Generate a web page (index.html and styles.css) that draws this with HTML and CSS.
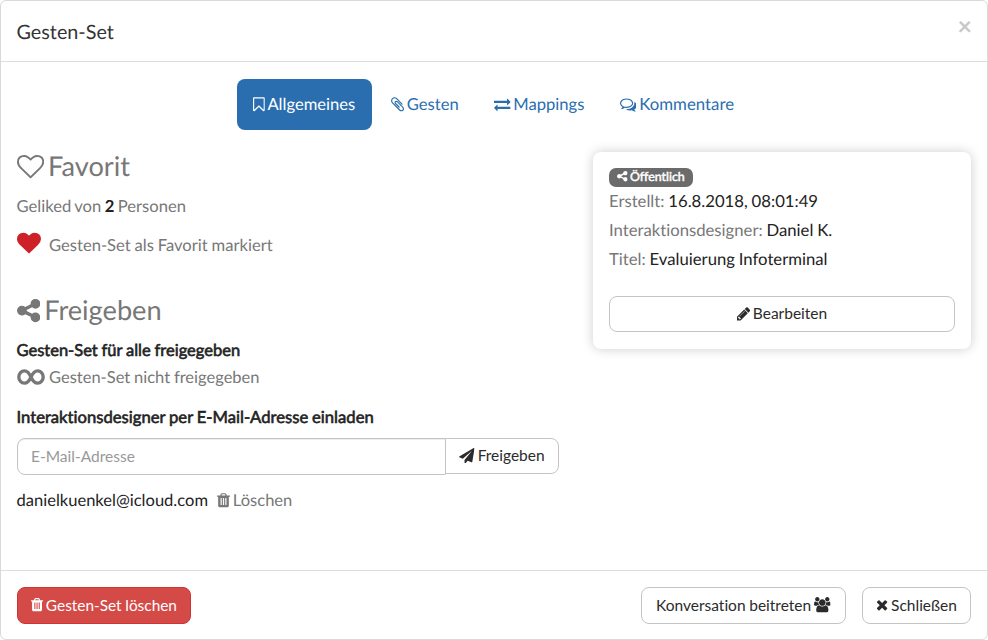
FILE: index.html
```html
<!DOCTYPE html>
<html lang="de">
<head>
<meta charset="utf-8">
<title>Gesten-Set</title>
<link rel="stylesheet" href="styles.css">
</head>
<body>
<svg class="sprite" aria-hidden="true">
  <symbol id="bookmark" viewBox="256 0 1280 1792"><path d="M1408 256h-1024v1242l423-406 89-85 89 85 423 406v-1242zm12-128q23 0 44 9 33 13 52.5 41t19.5 62v1289q0 34-19.5 62t-52.5 41q-19 8-44 8-48 0-83-32l-441-424-441 424q-36 33-83 33-23 0-44-9-33-13-52.5-41t-19.5-62v-1289q0-34 19.5-62t52.5-41q21-9 44-9h1048z"/></symbol>
  <symbol id="clip" viewBox="192 0 1408 1792"><path d="M1596 1385q0 117-79 196t-196 79q-135 0-235-100l-777-776q-113-115-113-271 0-159 110-270t269-111q158 0 273 113l605 606q10 10 10 22 0 16-30.5 46.5t-46.5 30.5q-13 0-23-10l-606-607q-79-77-181-77-106 0-179 75t-73 181q0 105 76 181l776 777q63 63 145 63 64 0 106-42t42-106q0-82-63-145l-581-581q-26-24-60-24-29 0-48 19t-19 48q0 32 25 59l410 410q10 10 10 22 0 16-31 47t-47 31q-12 0-22-10l-410-410q-63-61-63-149 0-82 57-139t139-57q88 0 149 63l581 581q100 98 100 235z"/></symbol>
  <symbol id="exchange" viewBox="0 0 1792 1792"><path d="M1792 1184v192q0 13-9.5 22.5t-22.5 9.5h-1376v192q0 13-9.5 22.5t-22.5 9.5q-12 0-24-10l-319-320q-9-9-9-22 0-14 9-23l320-320q9-9 23-9 13 0 22.5 9.5t9.5 22.5v192h1376q13 0 22.5 9.5t9.5 22.5zm0-544q0 14-9 23l-320 320q-9 9-23 9-13 0-22.5-9.5t-9.5-22.5v-192h-1376q-13 0-22.5-9.5t-9.5-22.5v-192q0-13 9.5-22.5t22.5-9.5h1376v-192q0-14 9-23t23-9q12 0 24 10l319 319q9 9 9 23z"/></symbol>
  <symbol id="comments" viewBox="0 0 1792 1792"><path d="M704 384q-153 0-286 52t-211.5 141-78.5 191q0 82 53 158t149 132l97 56-35 84q34-20 62-39l44-31 53 10q78 14 153 14 153 0 286-52t211.5-141 78.5-191-78.5-191-211.5-141-286-52zm0-128q191 0 353.5 68.5t256.5 186.5 94 257-94 257-256.5 186.5-353.5 68.5q-86 0-176-16-124 88-278 128-36 9-86 16h-3q-11 0-20.5-8t-11.5-21q-1-3-1-6.5t.5-6.5 2-6l2.5-5 3.5-5.5 4-5 4.5-5 4-4.5q5-6 23-25t26-29.5 22.5-29 25-38.5 20.5-44q-124-72-195-177t-71-224q0-139 94-257t256.5-186.5 353.5-68.5zm822 1169q10 24 20.5 44t25 38.5 22.5 29 26 29.5 23 25q1 1 4 4.5t4.5 5 4 5 3.5 5.5l2.5 5 2 6 .5 6.5-1 6.5q-3 14-13 22t-22 7q-50-7-86-16-154-40-278-128-90 16-176 16-271 0-472-132 58 4 88 4 161 0 309-45t264-129q125-92 192-212t67-254q0-77-23-152 129 71 204 178t75 230q0 120-71 224.5t-195 176.5z"/></symbol>
  <symbol id="heart-o" viewBox="0 0 1792 1792"><path d="M1664 596q0-81-21.5-143t-55-98.5-81.5-59.5-94-31-98-8-112 25.5-110.5 64-86.5 72-60 61.5q-18 22-49 22t-49-22q-24-28-60-61.5t-86.5-72-110.5-64-112-25.5-98 8-94 31-81.5 59.5-55 98.5-21.5 143q0 168 187 355l581 560 580-559q188-188 188-356zm128 0q0 221-229 450l-623 600q-18 18-44 18t-44-18l-624-602q-10-8-27.5-26t-55.5-65.5-68-97.5-53.5-121-23.5-138q0-220 127-344t351-124q62 0 126.5 21.5t120 58 95.5 68.5 76 68q36-36 76-68t95.5-68.5 120-58 126.5-21.5q224 0 351 124t127 344z"/></symbol>
  <symbol id="heart" viewBox="0 0 1792 1792"><path d="M896 1664q-26 0-44-18l-624-602q-10-8-27.5-26t-55.5-65.5-68-97.5-53.5-121-23.5-138q0-220 127-344t351-124q62 0 126.5 21.5t120 58 95.5 68.5 76 68q36-36 76-68t95.5-68.5 120-58 126.5-21.5q224 0 351 124t127 344q0 221-229 450l-623 600q-18 18-44 18z"/></symbol>
  <symbol id="share" viewBox="128 0 1536 1792"><path d="M1344 1024q133 0 226.500 93.500t93.500 226.500-93.500 226.500-226.500 93.500-226.500-93.500-93.500-226.500q0-12 2-34l-360-180q-92 86-218 86-133 0-226.500-93.500t-93.500-226.500 93.500-226.500 226.500-93.500q126 0 218 86l360-180q-2-22-2-34 0-133 93.500-226.500t226.500-93.500 226.500 93.500 93.500 226.500-93.500 226.500-226.500 93.500q-126 0-218-86l-360 180q2 22 2 34t-2 34l360 180q92-86 218-86z"/></symbol>
  <symbol id="infinity" viewBox="0 0 28 16"><path d="M14 8C12.300 4.200 10.400 1.800 7.400 1.800S1.800 4.500 1.800 8s2.600 6.200 5.600 6.200S12.300 11.800 14 8s3.600-6.200 6.600-6.200 5.600 2.700 5.600 6.200-2.600 6.200-5.600 6.200S15.700 11.800 14 8z" fill="none" stroke="currentColor" stroke-width="3.300"/></symbol>
  <symbol id="pencil" viewBox="128 0 1536 1792"><path d="M491 1536l91-91-235-235-91 91v107h128v128h107zm523-928q0-22-22-22-10 0-17 7l-542 542q-7 7-7 17 0 22 22 22 10 0 17-7l542-542q7-7 7-17zm-54-192l416 416-832 832h-416v-416zm683 96q0 53-37 90l-166 166-416-416 166-165q36-38 90-38 53 0 91 38l235 234q37 39 37 91z"/></symbol>
  <symbol id="trash" viewBox="192 0 1408 1792"><path d="M704 1376v-704q0-14-9-23t-23-9h-64q-14 0-23 9t-9 23v704q0 14 9 23t23 9h64q14 0 23-9t9-23zm256 0v-704q0-14-9-23t-23-9h-64q-14 0-23 9t-9 23v704q0 14 9 23t23 9h64q14 0 23-9t9-23zm256 0v-704q0-14-9-23t-23-9h-64q-14 0-23 9t-9 23v704q0 14 9 23t23 9h64q14 0 23-9t9-23zm-544-992h448l-48-117q-7-9-17-11h-317q-10 2-17 11zm928 32v64q0 14-9 23t-23 9h-96v948q0 83-47 143.500t-113 60.500h-832q-66 0-113-58.500t-47-141.500v-952h-96q-14 0-23-9t-9-23v-64q0-14 9-23t23-9h309l70-167q15-37 54-63t79-26h320q40 0 79 26t54 63l70 167h309q14 0 23 9t9 23z"/></symbol>
  <symbol id="times" viewBox="192 0 1408 1792"><path d="M1490 1322q0 40-28 68l-136 136q-28 28-68 28t-68-28l-294-294-294 294q-28 28-68 28t-68-28l-136-136q-28-28-28-68t28-68l294-294-294-294q-28-28-28-68t28-68l136-136q28-28 68-28t68 28l294 294 294-294q28-28 68-28t68 28l136 136q28 28 28 68t-28 68l-294 294 294 294q28 28 28 68z"/></symbol>
  <symbol id="plane" viewBox="0 0 1792 1792"><path d="M1764 11q33 24 27 64l-256 1536q-5 29-32 45-14 8-31 8-11 0-24-5l-453-185-242 295q-18 23-49 23-13 0-22-4-19-7-30.500-23.500t-11.500-36.500v-349l864-1059-1069 925-395-162q-37-14-40-55-2-40 32-59l1664-960q15-9 32-9 20 0 36 11z"/></symbol>
  <symbol id="users" viewBox="64 0 1920 1792"><path d="M657 896q-162 5-265 128h-134q-82 0-138-40.500t-56-118.500q0-353 124-353 6 0 43.500 21t97.500 42.500 119 21.500q67 0 133-23-5 37-5 66 0 139 81 256zm1071 637q0 120-73 189.500t-194 69.500h-874q-121 0-194-69.500t-73-189.500q0-53 3.500-103.500t14-109 26.500-108.500 43-97.500 62-81 85.500-53.500 111.500-20q10 0 43 21.500t73 48 107 48 135 21.500 135-21.500 107-48 73-48 43-21.500q61 0 111.500 20t85.500 53.500 62 81 43 97.500 26.500 108.500 14 109 3.500 103.500zm-1024-1277q0 106-75 181t-181 75-181-75-75-181 75-181 181-75 181 75 75 181zm704 384q0 159-112.500 271.500t-271.500 112.500-271.500-112.500-112.500-271.500 112.500-271.500 271.500-112.500 271.500 112.500 112.500 271.500zm576 225q0 78-56 118.500t-138 40.500h-134q-103-123-265-128 81-117 81-256 0-29-5-66 66 23 133 23 59 0 119-21.500t97.500-42.500 43.500-21q124 0 124 353zm-128-609q0 106-75 181t-181 75-181-75-75-181 75-181 181-75 181 75 75 181z"/></symbol>
</svg>
<div class="modal">
  <header class="modal-header">
    <h4>Gesten-Set</h4>
    <button class="close" aria-label="Schließen">×</button>
  </header>
  <main class="modal-body">
    <nav class="pills">
      <a class="pill active"><svg class="icon w1280"><use href="#bookmark"/></svg> Allgemeines</a>
      <a class="pill"><svg class="icon w1408"><use href="#clip"/></svg> Gesten</a>
      <a class="pill"><svg class="icon"><use href="#exchange"/></svg> Mappings</a>
      <a class="pill"><svg class="icon"><use href="#comments"/></svg> Kommentare</a>
    </nav>
    <div class="columns">
      <section class="left">
        <h3><svg class="icon"><use href="#heart-o"/></svg> Favorit</h3>
        <p class="liked">Geliked von <strong>2</strong> Personen</p>
        <p class="favorite"><svg class="icon red"><use href="#heart"/></svg><span>Gesten-Set als Favorit markiert</span></p>
        <h3 class="share-title"><svg class="icon w1536"><use href="#share"/></svg> Freigeben</h3>
        <p class="label">Gesten-Set für alle freigegeben</p>
        <p class="shared"><svg class="infinity"><use href="#infinity"/></svg><span>Gesten-Set nicht freigegeben</span></p>
        <p class="label invite">Interaktionsdesigner per E-Mail-Adresse einladen</p>
        <div class="input-group">
          <input type="text" placeholder="E-Mail-Adresse">
          <button class="btn addon"><svg class="icon"><use href="#plane"/></svg> Freigeben</button>
        </div>
        <p class="member"><span class="dark">danielkuenkel@icloud.com</span><span><svg class="icon w1408"><use href="#trash"/></svg> Löschen</span></p>
      </section>
      <aside class="card">
        <div class="badge"><svg class="icon w1536"><use href="#share"/></svg> Öffentlich</div>
        <div class="facts">
          <p>Erstellt: <span class="dark">16.8.2018, 08:01:49</span></p>
          <p>Interaktionsdesigner: <span class="dark">Daniel K.</span></p>
          <p>Titel: <span class="dark">Evaluierung Infoterminal</span></p>
        </div>
        <button class="btn edit"><svg class="icon w1536"><use href="#pencil"/></svg> Bearbeiten</button>
      </aside>
    </div>
  </main>
  <footer class="modal-footer">
    <button class="btn danger"><svg class="icon w1408"><use href="#trash"/></svg> Gesten-Set löschen</button>
    <button class="btn join">Konversation beitreten <svg class="icon w1920"><use href="#users"/></svg></button>
    <button class="btn dismiss"><svg class="icon w1408"><use href="#times"/></svg> Schließen</button>
  </footer>
</div>
</body>
</html>
```
FILE: styles.css
```css
* { box-sizing: border-box; }
body { margin: 0; background: #fff; color: #777; font: 16.6px/29px Lato, sans-serif; text-rendering: geometricPrecision; font-variant-ligatures: none; word-spacing: -.4px; }
h3, h4, p { margin: 0; font-weight: 400; }
button, input { font: inherit; font-variant-ligatures: none; word-spacing: -.3px; }
.sprite { display: none; }

.icon { width: 1em; height: 1em; margin-right: -.06em; vertical-align: -0.143em; fill: currentColor; }
.w1280 { width: .714em; }
.w1408 { width: .786em; }
.w1536 { width: .857em; }
.w1920 { width: 1.071em; margin: 0 0 0 -.03em; }
.dark { color: #222; }

.modal { display: flex; flex-direction: column; height: 640px; border: 1px solid #d9d9d9; border-radius: 6px; }
.modal-header { display: flex; justify-content: space-between; height: 61px; padding: 16px 15px 0 15.5px; border-bottom: 1px solid #ddd; }
.modal-header h4 { color: #333; font-size: 19.8px; line-height: 30px; }
.close { align-self: flex-start; padding: 0; border: 0; background: none; color: #c8c8c8; font-size: 25px; font-weight: 700; line-height: 16px; }
.modal-body { flex: 1; padding: 17px 16px 0 15.5px; }

.pills { display: flex; justify-content: center; gap: 2px; height: 51px; }
.pill { padding: 0 16.6px; border-radius: 8px; color: #2a6eb0; line-height: 50px; }
.pill.active { padding: 0 17px 0 16.4px; background: #2a6eb0; color: #fff; }
.pill:last-child { font-size: 16.8px; }

.columns { display: flex; justify-content: space-between; align-items: flex-start; }
.left { width: 542.5px; padding-top: 19px; }
h3 { font-size: 27.2px; line-height: 34px; }
h3 .icon { margin-right: -.08em; }
.liked { margin-top: 9px; }
.liked strong { color: #222; }
.liked { word-spacing: -.8px; }
.favorite { display: flex; align-items: center; gap: 8.5px; margin-top: 10px; }
.red { margin: -5px 0 0; color: #ce2127; font-size: 24px; }
.share-title { margin-top: 33px; }
.label { margin-top: 10px; color: #222; font-size: 16.5px; line-height: 27px; -webkit-text-stroke: .6px #222; }
.shared { display: flex; align-items: center; gap: 4.5px; font-size: 16.5px; line-height: 27px; }
.infinity { width: 28px; height: 16px; margin-top: -1px; }
.label.invite { margin-top: 13px; font-size: 16.65px; }

.btn { height: 37px; padding: 0 13px 1px; border: 1px solid #c4c4c4; border-radius: 8px; background: #fff; color: #2b2b2b; font-size: 15.5px; line-height: 33px; white-space: nowrap; }
.input-group { display: flex; align-items: flex-start; margin: 7px 0 0 .5px; }
input { flex: 1; min-width: 0; height: 37px; padding: 0 13px 1px; border: 1px solid #c4c4c4; border-radius: 8px 0 0 8px; font-size: 15.5px; box-shadow: inset 0 1px 1px rgba(0, 0, 0, .075); }
input::placeholder { color: #999; }
.addon { width: 114px; height: 36px; margin-left: -1px; border-radius: 0 8px 8px 0; }
.member { display: flex; gap: 9px; margin-top: 11px; font-size: 16.55px; }

.card { width: 378px; height: 197px; margin-top: 22px; padding: 16px; border-radius: 8px; box-shadow: 0 0 12px rgba(0, 0, 0, .2); }
.badge { width: 84px; height: 19px; border-radius: 7px; background: #6b6b6b; color: #fff; font-size: 12.4px; line-height: 18px; text-align: center; -webkit-text-stroke: .5px #fff; }
.facts { font-size: 16.7px; }
.edit { width: 346px; height: 36px; margin-top: 22px; }

.modal-footer { display: flex; gap: 16px; height: 69px; padding: 16px 16px 0; border-top: 1px solid #ddd; }
.danger { width: 174px; padding: 0 0 1px; border-color: #cf3334; background: #d44a47; color: #fff; font-size: 15.4px; }
.join { width: 205px; margin-left: auto; }
.dismiss { width: 109px; }
```
